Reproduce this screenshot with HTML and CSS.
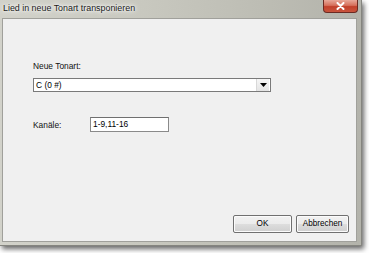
FILE: index.html
```html
<!DOCTYPE html>
<html>
<head>
<meta charset="utf-8">
<link rel="stylesheet" href="styles.css">
</head>
<body>
<div class="window">
  <div class="titlebar">
    <span class="title">Lied in neue Tonart transponieren</span>
    <div class="close">
      <svg width="9" height="8" viewBox="0 0 9 8"><path d="M1.5 1 L7.5 7 M7.5 1 L1.5 7" stroke="#fff" stroke-width="2" stroke-linecap="round"/></svg>
    </div>
  </div>
  <div class="client">
    <div class="form">
      <div class="label">Neue Tonart:</div>
      <div class="combo">
        <span class="combo-text">C (0 #)</span>
        <span class="combo-btn"><svg width="7" height="4" viewBox="0 0 7 4"><path d="M0 0 H7 L3.5 4 Z" fill="#000"/></svg></span>
      </div>
      <div class="row">
        <span class="label row-label">Kanäle:</span>
        <div class="textbox">1-9,11-16</div>
      </div>
    </div>
    <div class="buttons">
      <div class="btn btn-ok">OK</div>
      <div class="btn btn-cancel">Abbrechen</div>
    </div>
  </div>
</div>
</body>
</html>
```
FILE: styles.css
```css
html, body {
  margin: 0;
  padding: 0;
  background: #ffffff;
  width: 369px;
  height: 253px;
  overflow: hidden;
}
body {
  font-family: "Liberation Sans", Arial, sans-serif;
  color: #000;
}
.window {
  width: 362px;
  height: 246px;
  display: flex;
  flex-direction: column;
  background: linear-gradient(90deg, #d2d2ca 0%, #c8c8bf 40%, #bcbcb3 75%, #b3b3ab 100%);
  box-shadow: 2px 3px 5px rgba(0,0,0,0.6);
  border-right: 1px solid #85857f;
  border-bottom: 1px solid #85857f;
  box-sizing: border-box;
}
.titlebar {
  height: 18px;
  display: flex;
  align-items: flex-start;
  flex: none;
}
.title {
  font-family: "Liberation Sans", Arial, sans-serif;
  font-size: 8.9px;
  line-height: 16px;
  padding-left: 3px;
  color: #1a1a1a;
  text-shadow: 0 0 7px #ffffff, 0 0 4px #ffffff, 0 0 2px #f4f4f0;
}
.close {
  margin-left: auto;
  margin-right: 3px;
  width: 35px;
  height: 13px;
  box-sizing: border-box;
  border: 1px solid #6b2a22;
  border-top: none;
  border-radius: 0 0 4px 4px;
  background: linear-gradient(180deg, #e8a899 0%, #d6705c 45%, #c2402b 55%, #c9553e 100%);
  display: flex;
  align-items: center;
  justify-content: center;
}
.client {
  flex: 1;
  margin: 0 4px 3px 2px;
  background: #f0f0f0;
  border: 1px solid #a0a09b;
  display: flex;
  flex-direction: column;
  justify-content: space-between;
  padding: 0 7px 8px 30px;
}
.form {
  display: flex;
  flex-direction: column;
  padding-top: 42px;
}
.label {
  font-size: 8.4px;
  line-height: 10px;
  color: #111;
}
.combo {
  margin-top: 7px;
  width: 238px;
  height: 14px;
  box-sizing: border-box;
  border: 1px solid #7a7a7a;
  background: #fff;
  display: flex;
  align-items: center;
}
.combo-text {
  font-size: 8.4px;
  padding-left: 2px;
  flex: 1;
}
.combo-btn {
  width: 13px;
  height: 12px;
  margin-right: 1px;
  box-sizing: border-box;
  border-left: 1px solid #d8d8d8;
  background: linear-gradient(180deg, #f6f6f6, #e4e4e4);
  display: flex;
  align-items: center;
  justify-content: center;
}
.row {
  margin-top: 25px;
  display: flex;
  align-items: center;
}
.row-label {
  width: 57px;
}
.textbox {
  width: 79px;
  height: 15px;
  box-sizing: border-box;
  border: 1px solid #8a8a8a;
  border-top-color: #6f6f6f;
  background: #fff;
  font-size: 8.4px;
  line-height: 13px;
  padding-left: 2px;
}
.buttons {
  display: flex;
  justify-content: flex-end;
  gap: 4px;
}
.btn {
  height: 18px;
  box-sizing: border-box;
  border: 1px solid #707070;
  background: linear-gradient(180deg, #f2f2f2 0%, #ebebeb 50%, #dddddd 51%, #cfcfcf 100%);
  font-size: 8.2px;
  line-height: 16px;
  text-align: center;
  border-radius: 2px;
  box-shadow: inset 0 0 0 1px #fbfbfb;
}
.btn-ok {
  width: 59px;
}
.btn-cancel {
  width: 53px;
}
```
